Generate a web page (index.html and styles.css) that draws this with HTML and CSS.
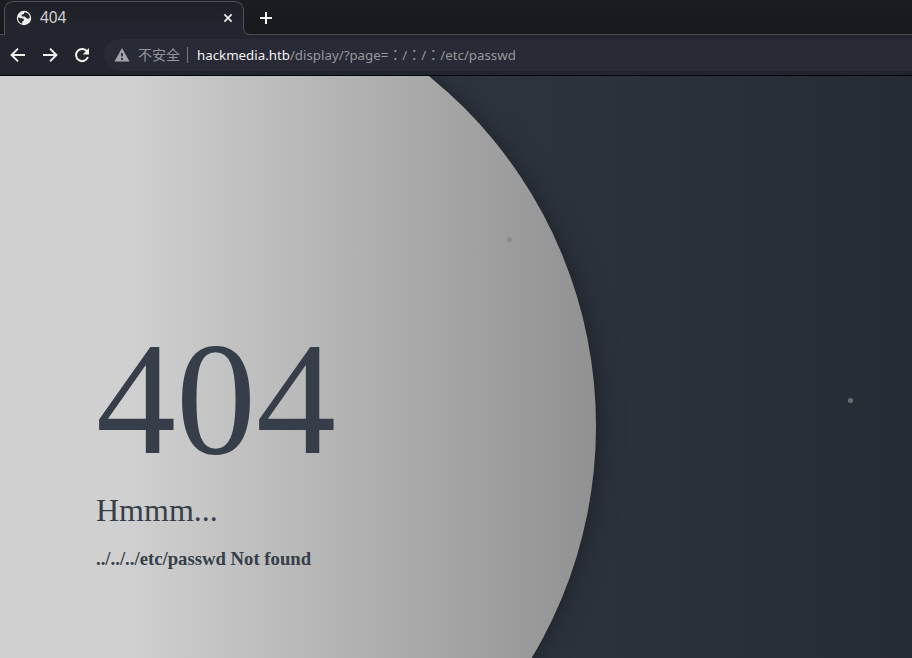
FILE: index.html
```html
<!DOCTYPE html>
<html lang="en">
<head>
<meta charset="utf-8">
<title>404</title>
<link rel="stylesheet" href="styles.css">
</head>
<body>
<header class="browser">
  <div class="tabs">
    <div class="tab">
      <svg class="globe" viewBox="0 0 16 16"><circle cx="8" cy="8" r="7.2" fill="#f0f0ee"/><path d="M8.3 2.2 7.8 4 5.6 4.8 5.7 6.5 8.8 6.6 10.5 8.3 12.8 8.7 13.9 7.4A6 6 0 0 0 8.3 2.2ZM2.1 7.2 5 8.2 7.9 8.8 7.8 10.6 6.3 11.5 6.1 13.7A6 6 0 0 1 2.1 7.2Z" fill="#24262f"/></svg>
      <span class="tab-title">404</span>
      <svg class="close" viewBox="0 0 10 10"><path d="m1.4 1.4 7.2 7.2m0-7.2L1.4 8.6" stroke="#eeeeec" stroke-width="1.7"/></svg>
    </div>
    <svg class="flare" viewBox="0 0 8 8"><path d="M0 0V8H8Q.5 7.5 .5 0Z" fill="#23252e"/><path d="M.5 0Q.5 7.5 8 7.5" fill="none" stroke="#505157"/></svg>
    <svg class="plus" viewBox="0 0 12 12"><path d="M6 0v12M0 6h12" stroke="#f4f4f4" stroke-width="2"/></svg>
  </div>
  <nav class="toolbar">
    <svg class="nav-icon" viewBox="0 0 16 16"><path d="M15 8H2M8 1.6 1.6 8 8 14.4"/></svg>
    <svg class="nav-icon" viewBox="0 0 16 16"><path d="M1 8h13M8 1.6 14.4 8 8 14.4"/></svg>
    <svg class="nav-icon" viewBox="0 0 16 16"><path d="M13.3 4.8A6.1 6.1 0 1 0 13.9 10"/><path class="solid" d="M15 1v6.4H8.7z"/></svg>
    <div class="address">
      <svg class="warning" viewBox="0 0 16 14"><path d="M8 0 15.5 13.5H.5Z" fill="#a3a5ab"/><path d="M8 5v3.5M8 10v2" stroke="#262833" stroke-width="1.7"/></svg>
      <span class="insecure">不安全</span>
      <span class="divider"></span>
      <span class="url"><b>hackmedia.htb</b>/display/?page=<i lang="zh-TW">：</i>/<i lang="zh-TW">：</i>/<i lang="zh-TW">：</i>/etc/passwd</span>
    </div>
  </nav>
</header>
<main class="page">
  <div class="moon"></div>
  <div class="star star-dim"></div>
  <div class="star star-light"></div>
  <section class="error">
    <div class="code">404</div>
    <div class="subtitle">Hmmm...</div>
    <h3 class="description">../../../etc/passwd Not found</h3>
  </section>
</main>
</body>
</html>
```
FILE: styles.css
```css
* { box-sizing: border-box; }
body {
  margin: 0;
  width: 912px;
  height: 658px;
  overflow: hidden;
  display: flex;
  flex-direction: column;
}
svg { display: block; flex: none; }
.browser {
  height: 76px;
  flex: none;
  background: #23252e;
  border-bottom: 1px solid #05060a;
  font-family: "Noto Sans", "Noto Sans CJK SC", sans-serif;
}
.tabs {
  display: flex;
  height: 35px;
  padding-left: 4px;
  background: linear-gradient(#1c1d22, #17181c);
  box-shadow: inset 0 -1px #4b4c52;
}
.tab {
  display: flex;
  align-items: center;
  width: 240px;
  height: 34px;
  margin-top: 1px;
  padding: 0 10px 2px 11px;
  border: 1px solid #505157;
  border-bottom: 0;
  border-radius: 9px 9px 0 0;
  background: linear-gradient(#1e2027, #23252e 70%);
}
.globe { width: 16px; height: 16px; }
.tab-title { margin-left: 8px; color: #d3d3d3; font-size: 15.4px; line-height: 20px; }
.close { width: 10px; height: 10px; margin-left: auto; }
.flare { width: 8px; height: 8px; margin: 27px 0 0 -1px; }
.plus { width: 12px; height: 12px; margin: 12px 0 0 9px; }
.toolbar {
  display: flex;
  align-items: center;
  gap: 16px;
  height: 40px;
  padding-left: 10px;
}
.nav-icon {
  width: 16px;
  height: 16px;
  fill: none;
  stroke: #f0f0ec;
  stroke-width: 2;
}
.nav-icon .solid { fill: #f0f0ec; stroke: none; }
.address {
  display: flex;
  align-items: center;
  flex: 1;
  height: 32px;
  margin-left: -2px;
  padding-left: 10px;
  border-radius: 16px 0 0 16px;
  background: #282a35;
}
.warning { width: 16px; height: 14px; }
.insecure { margin: 0 0 2px 8px; color: #93959c; font: 14px/20px "Noto Sans CJK SC", sans-serif; }
.divider { width: 1px; height: 16px; margin: 0 9px 0 7px; background: #777981; }
.url { color: #96979c; font-size: 13.3px; line-height: 20px; white-space: pre; }
.url b { color: #f2f2f2; font-weight: 400; }
.url i {
  display: inline-block;
  width: 14px;
  font-family: "Noto Sans CJK TC", sans-serif;
  font-size: 14px;
  font-style: normal;
  line-height: 16px;
}
.page {
  position: relative;
  flex: 1;
  overflow: hidden;
  background: linear-gradient(90deg, #2f3640 23%, #181b20 100%) 0 0 / 1750px 100%;
}
.moon {
  position: absolute;
  top: -100px;
  left: -304px;
  width: 900px;
  height: 900px;
  border-radius: 50%;
  background: linear-gradient(90deg, #d0d0d0 48%, #919191 100%);
  box-shadow: 0 0 30px -4px rgba(0, 0, 0, .5);
}
.star {
  position: absolute;
  width: 5px;
  height: 5px;
  border-radius: 50%;
}
.star-dim { left: 507px; top: 161px; background: #8a8a8a; }
.star-light { left: 848px; top: 322px; background: #6c6e73; }
.error {
  position: relative;
  padding: 231px 0 0 96px;
  color: #363e49;
  font-family: "Liberation Serif", serif;
}
.code { font-size: 160px; line-height: 184px; }
.subtitle { margin-top: 1px; font-size: 32px; line-height: 36px; }
.description { margin: 20px 0 0; font-size: 18.72px; line-height: 22px; }
```
